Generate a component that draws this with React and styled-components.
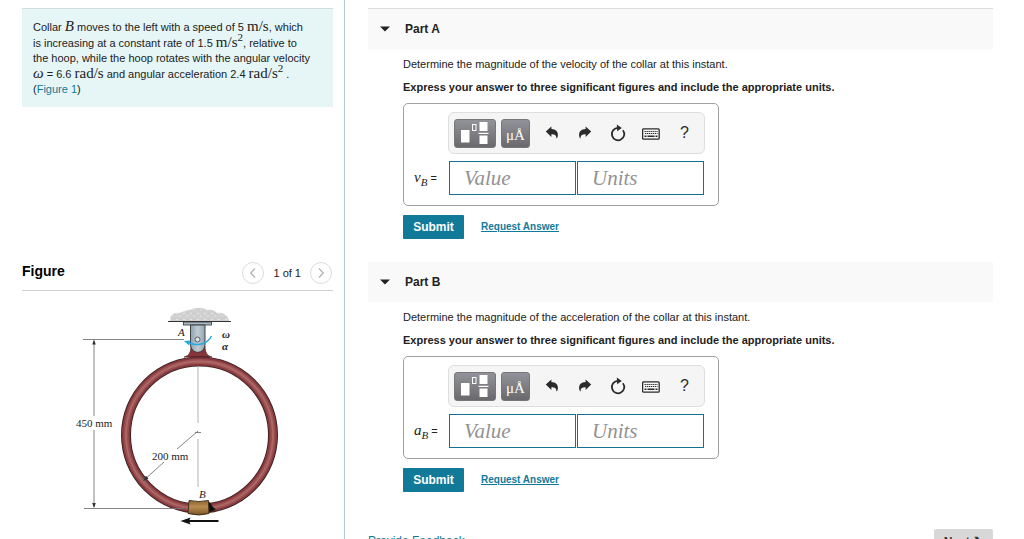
import React from "react";
import styled, { createGlobalStyle } from "styled-components";

const sans = '"Liberation Sans", Arial, sans-serif';
const serif = '"Liberation Serif", "Times New Roman", serif';
const teal = "#127a99";

const GlobalStyle = createGlobalStyle`
  * { box-sizing: border-box; }
  body {
    margin: 0;
    background: #fff;
    color: #222;
    font: 11px/16px ${sans};
  }
  button, input { font: inherit; margin: 0; }
  p, h2, h3 { margin: 0; }
  a { color: ${teal}; }
`;

const Page = styled.div`
  display: grid;
  grid-template-columns: 345px minmax(0, 1fr);
  height: 100vh;
  overflow: hidden;
`;

const Side = styled.aside`
  border-right: 1px solid #b5cadb;
  padding: 8px 11px 0 22px;
  overflow: hidden;
`;

const Intro = styled.p`
  background: #e6f6f7;
  border-top: 1px solid #d3dcdf;
  min-height: 99px;
  padding: 10px 0 9px 11px;
  margin-bottom: 153px;
  line-height: 15px;
  white-space: nowrap;
  a { text-decoration: none; }
`;

const Math = styled.span`
  font-family: ${serif};
  font-size: 15px;
  font-style: ${(p) => (p.$italic ? "italic" : "normal")};
  line-height: 15px;
  sup { font-size: 11px; line-height: 0; }
  sub { font-size: 11px; line-height: 0; }
`;

const FigureHead = styled.div`
  display: flex;
  justify-content: space-between;
  border-bottom: 1px solid #d2d2d2;
  height: 31px;
  h2 { color: #000; font-size: 14px; line-height: 22px; }
`;

const Pager = styled.div`
  display: flex;
  align-items: center;
  gap: 9px;
  height: 26px;
  padding-right: 1px;
`;

const RoundButton = styled.button`
  display: grid;
  place-items: center;
  width: 22px;
  height: 22px;
  padding: 0;
  border: 1px solid #dcdcdc;
  border-radius: 50%;
  background: #fff;
`;

const Drawing = styled.svg`
  display: block;
  width: 100%;
  text {
    font-family: ${serif};
    font-size: 11px;
    fill: #222;
  }
`;

const Main = styled.main`
  padding: 8px 31px 0 23px;
  overflow: hidden;
`;

const Parts = styled.div`
  border-top: 1px solid #dcdcdc;
`;

const PartHead = styled.h2`
  display: flex;
  align-items: center;
  gap: 15px;
  height: 40px;
  padding-left: 12px;
  background: #f9f9f9;
  font-size: 12px;
`;

const PartBody = styled.div`
  padding: 7px 0 23px 35px;
`;

const Question = styled.p`
  margin-bottom: 7px;
`;

const Instruction = styled.p`
  font-weight: bold;
  margin-bottom: 8px;
`;

const AnswerBox = styled.div`
  display: grid;
  grid-template-columns: 34px 257px;
  align-items: center;
  row-gap: 7px;
  width: 316px;
  height: 103px;
  padding: 8px 0 10px 10px;
  border: 1px solid #a0a0a0;
  border-radius: 5px;
`;

const Toolbar = styled.div`
  grid-column: 2;
  display: flex;
  align-items: center;
  height: 42px;
  padding: 0 3px 0 5px;
  border: 1px solid #dedede;
  border-radius: 6px;
  background: #f5f5f5;
`;

const DarkTool = styled.button`
  display: grid;
  place-items: center;
  width: ${(p) => (p.$wide ? 42 : 29)}px;
  height: 29px;
  margin-right: 5px;
  padding: ${(p) => (p.$wide ? 0 : 4)}px 0 0;
  border: 1px solid #777;
  border-radius: 3px;
  background: linear-gradient(#92929a, #69696d);
  color: #fff;
  font-family: ${serif};
  font-size: 15px;
`;

const Tool = styled.button`
  flex: 1;
  display: grid;
  place-items: center;
  height: 29px;
  padding: 0;
  border: 0;
  background: none;
  color: #2b2b2b;
  font-size: 16px;
`;

const Fields = styled.div`
  display: flex;
  gap: 1px;
  padding: 0 1px;
`;

const Field = styled.input`
  flex: 1;
  min-width: 0;
  height: 34px;
  padding: 0 0 0 14px;
  border: 1px solid #14718f;
  border-radius: 0;
  background: #fff;
  font: italic 21px ${serif};
  &::placeholder { color: #929292; opacity: 1; }
`;

const Actions = styled.div`
  display: flex;
  align-items: center;
  gap: 17px;
  margin-top: 9px;
  a { font-size: 10px; font-weight: bold; line-height: 12px; }
`;

const Submit = styled.button`
  width: 61px;
  height: 24px;
  padding: 0;
  border: 0;
  border-radius: 1px;
  background: ${teal};
  color: #fff;
  font-size: 12px;
  font-weight: bold;
`;

const Footer = styled.footer`
  display: flex;
  justify-content: space-between;
  padding-top: 14px;
  font-size: 12px;
  a { padding-top: 4px; text-decoration: none; }
`;

const Next = styled.button`
  width: 59px;
  height: 26px;
  padding: 0;
  border: 0;
  border-radius: 2px;
  background: #d8d8d8;
  color: #333;
  font-weight: bold;
`;

const Chevron = ({ right }) => (
  <svg width="8" height="12" viewBox="0 0 8 12" fill="none" stroke="#b4b4b4" strokeWidth="1.3">
    <path d={right ? "M2 1.5 6.3 6 2 10.5" : "M6 1.5 1.7 6 6 10.5"} />
  </svg>
);

const TemplateIcon = () => (
  <svg width="28" height="24" viewBox="0 0 28 24" fill="#fff">
    <rect x="0" y="9" width="8.5" height="12.5" />
    <rect x="11.5" y="3.5" width="3.5" height="6" fill="none" stroke="#fff" />
    <rect x="18.5" y="1" width="8" height="9" />
    <rect x="17.5" y="11.8" width="10" height="1.2" />
    <rect x="18.5" y="14.5" width="8" height="8.5" />
  </svg>
);

const TurnArrow = ({ forward }) => (
  <svg width="14" height="14" viewBox="0 0 14 14" fill="currentColor">
    <path
      transform={forward ? "translate(14 0) scale(-1 1)" : undefined}
      d="M.8 5.4 6.4.4v2.7c4.3.1 6.5 2.5 6.5 5.8 0 1.7-.6 2.8-1.5 3.7.2-3.1-1.4-4.3-5-4.3v2.6z"
    />
  </svg>
);

const ResetIcon = () => (
  <svg width="16" height="18" viewBox="0 0 16 18">
    <path d="M12.9 6.2A6.2 6.2 0 1 1 7.5 3.9" fill="none" stroke="currentColor" strokeWidth="1.8" />
    <path d="M6.8.6 11.8 4 7.2 7.2z" fill="currentColor" />
  </svg>
);

const KeyboardIcon = () => (
  <svg width="18" height="14" viewBox="0 0 18 14" fill="none" stroke="currentColor">
    <rect x=".6" y="2.9" width="16.6" height="10.3" rx="1" strokeWidth="1.3" />
    <path d="M2.5 5.5h13M3 7.5h12.5" strokeWidth="1.2" strokeDasharray="1.3 .7" />
    <path d="M2.5 10.3h2m1 0h7m1 0h2" strokeWidth="1.5" />
  </svg>
);

const Ring = (props) => <circle cx="199.5" cy="435" r="73.5" fill="none" {...props} />;

const HoopDrawing = () => (
  <Drawing viewBox="22 291 311 240" role="img" aria-label="Collar B on a hoop pinned at A">
    <defs>
      <linearGradient id="steel">
        <stop offset="0" stopColor="#8fa1ad" />
        <stop offset=".5" stopColor="#c0ccd4" />
        <stop offset="1" stopColor="#93a5b0" />
      </linearGradient>
      <linearGradient id="brass" x2="0" y2="1">
        <stop offset="0" stopColor="#8c6632" />
        <stop offset=".45" stopColor="#b98c50" />
        <stop offset="1" stopColor="#7a5426" />
      </linearGradient>
      <pattern id="grain" width="7" height="6" patternUnits="userSpaceOnUse">
        <rect width="7" height="6" fill="#d0d0d0" />
        <circle cx="2" cy="1.5" r=".7" fill="#f2f2f2" />
        <circle cx="5" cy="4" r=".7" fill="#eee" />
        <circle cx="5.5" cy="1" r=".4" fill="#b8b8b8" />
      </pattern>
    </defs>
    <path d="M170 321c0-5 3-9 9-8 5-1 6-3 11-3 6-3 12-3 17 0 5-1 8 1 10 3 7-1 11 3 12 8z" fill="url(#grain)" />
    <path d="M168 321.5h63" stroke="#333" strokeWidth="1.2" />
    <rect x="183.5" y="322" width="28" height="3" fill="#a9bac5" stroke="#333" strokeWidth=".8" />
    <path d="M184 357c5-1 7-5 7-11h14c0 6 2 10 7 11z" fill="#87343a" stroke="#4b272a" strokeWidth=".7" />
    <path d="M190.5 325h14.5v19c0 11-14.5 11-14.5 0z" fill="url(#steel)" stroke="#333" strokeWidth=".9" />
    <Ring stroke="#33201f" strokeWidth="10" />
    <Ring stroke="#84383d" strokeWidth="8.4" />
    <Ring stroke="#9b5052" strokeWidth="5" />
    <Ring stroke="#ac6765" strokeWidth="1.8" />
    <g stroke="#777" strokeWidth=".9" fill="none">
      <path d="M83 339.5h101M84 508.5h100M94 341v75M94 430v77" />
      <path d="M198 366v57M198 439v48" stroke="#aaa" />
      <path d="M195 432.5h6M198 431 177 449M164 462l-21 19M139 475l9 10" />
    </g>
    <path d="M94 339.5l1.8 5h-3.6zM94 508l1.8-5h-3.6zM143 481l5.5-2.5-2.6-2.7z" fill="#333" />
    <circle cx="197.5" cy="339.5" r="2.5" fill="#d8e1e6" stroke="#444" strokeWidth=".8" />
    <path d="M211.5 336c-4 8-13 10.5-22 7" fill="none" stroke="#24a9e2" strokeWidth="1.5" />
    <path d="M184 341l6.5-.4-1.4 5z" fill="#24a9e2" />
    <path d="M208 502c3-1 4 6 8 7-2 2-5 3-8 3z" fill="#111" />
    <path d="M189 500.5q10 2 19.5 0l.5 13q-10 3-21 0z" fill="url(#brass)" stroke="#38280f" strokeWidth=".9" />
    <path d="M218.5 521H188" stroke="#111" strokeWidth="2" />
    <path d="M180.5 521l10-3.5-1.5 3.5 1.5 3.5z" fill="#111" />
    <text x="76" y="427">450 mm</text>
    <text x="152" y="460">200 mm</text>
    <g fontStyle="italic">
      <text x="178" y="336">A</text>
      <text x="199" y="498">B</text>
      <text x="222" y="338" fontWeight="bold">ω</text>
      <text x="222" y="350" fontWeight="bold">α</text>
    </g>
  </Drawing>
);

function Part({ name, quantity, symbol }) {
  const id = `value-${symbol}`;
  return (
    <section>
      <PartHead>
        <svg width="10" height="6" viewBox="0 0 10 6" fill="#222">
          <path d="M0 .5h10L5 5.5z" />
        </svg>
        {name}
      </PartHead>
      <PartBody>
        <Question>Determine the magnitude of the {quantity} of the collar at this instant.</Question>
        <Instruction>
          Express your answer to three significant figures and include the appropriate units.
        </Instruction>
        <AnswerBox>
          <Toolbar>
            <DarkTool $wide type="button" aria-label="Templates"><TemplateIcon /></DarkTool>
            <DarkTool type="button">μÅ</DarkTool>
            <Tool type="button" aria-label="Undo"><TurnArrow /></Tool>
            <Tool type="button" aria-label="Redo"><TurnArrow forward /></Tool>
            <Tool type="button" aria-label="Reset"><ResetIcon /></Tool>
            <Tool type="button" aria-label="Keyboard"><KeyboardIcon /></Tool>
            <Tool type="button">?</Tool>
          </Toolbar>
          <label htmlFor={id}>
            <Math $italic>{symbol}<sub>B</sub></Math> =
          </label>
          <Fields>
            <Field id={id} placeholder="Value" />
            <Field aria-label="Units" placeholder="Units" />
          </Fields>
        </AnswerBox>
        <Actions>
          <Submit type="button">Submit</Submit>
          <a href="#request">Request Answer</a>
        </Actions>
      </PartBody>
    </section>
  );
}

export default function App() {
  return (
    <Page>
      <GlobalStyle />
      <Side>
        <Intro>
          Collar <Math $italic>B</Math> moves to the left with a speed of 5 <Math>m/s</Math>, which
          <br />
          is increasing at a constant rate of 1.5 <Math>m/s<sup>2</sup></Math>, relative to
          <br />
          the hoop, while the hoop rotates with the angular velocity
          <br />
          <Math $italic>ω</Math> = 6.6 <Math>rad/s</Math> and angular acceleration 2.4{" "}
          <Math>rad/s<sup>2</sup></Math> .
          <br />
          (<a href="#figure">Figure 1</a>)
        </Intro>
        <FigureHead id="figure">
          <h2>Figure</h2>
          <Pager>
            <RoundButton type="button" aria-label="Previous figure"><Chevron /></RoundButton>
            <span>1 of 1</span>
            <RoundButton type="button" aria-label="Next figure"><Chevron right /></RoundButton>
          </Pager>
        </FigureHead>
        <HoopDrawing />
      </Side>
      <Main>
        <Parts>
          <Part name="Part A" quantity="velocity" symbol="v" />
          <Part name="Part B" quantity="acceleration" symbol="a" />
        </Parts>
        <Footer>
          <a href="#feedback">Provide Feedback</a>
          <Next type="button">Next ❯</Next>
        </Footer>
      </Main>
    </Page>
  );
}
